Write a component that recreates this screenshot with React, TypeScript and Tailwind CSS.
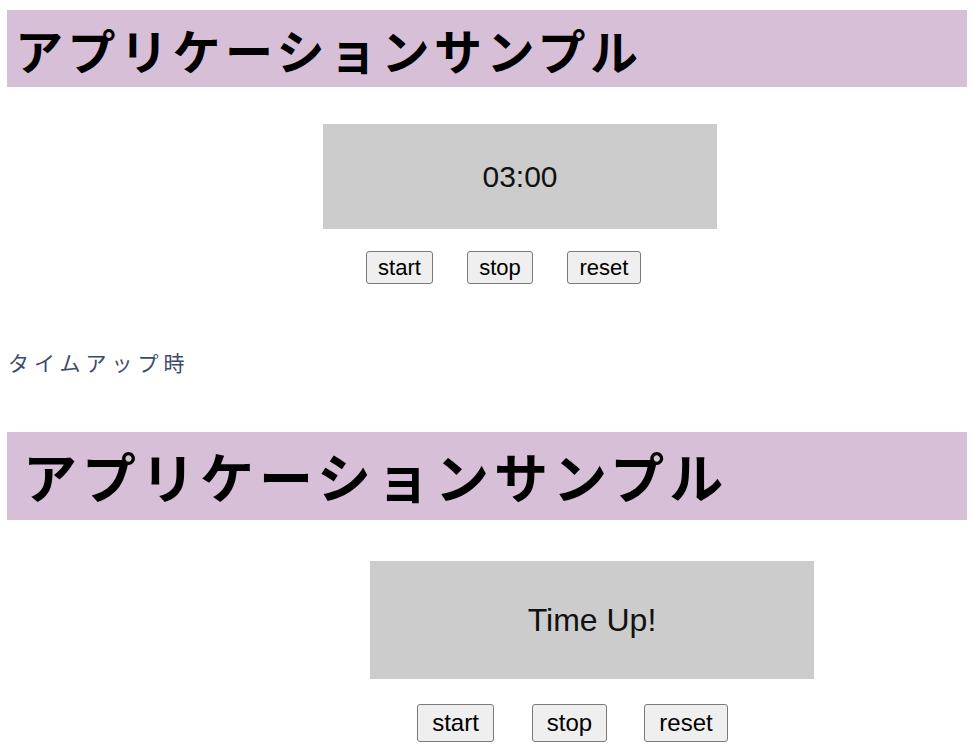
import React from "react";

function Btn({ label, className }: { label: string; className: string }) {
  return (
    <button
      className={`${className} flex items-center justify-center rounded-[3px] border border-[#7a7a7a] bg-[#efefef] text-black leading-none font-['Liberation_Sans',Arial,sans-serif]`}
    >
      {label}
    </button>
  );
}

export default function App() {
  return (
    <div className="w-[974px] h-[756px] overflow-hidden bg-white px-[7px] pt-[10px] flex flex-col items-start">
      <h1 className="self-stretch h-[77px] bg-[#d8bfd8] flex items-center pl-[8px] text-[48px] tracking-[4.5px] font-bold text-black leading-none font-['Noto_Sans_CJK_JP',sans-serif]">
        アプリケーションサンプル
      </h1>
      <div className="mt-[37px] ml-[316px] w-[394px] h-[105px] bg-[#cccccc] flex items-center justify-center text-[30px] text-[#111] font-['Liberation_Sans',Arial,sans-serif]">
        03:00
      </div>
      <div className="mt-[22px] ml-[359px] flex gap-[34px]">
        <Btn label="start" className="w-[67px] h-[33px] text-[22px]" />
        <Btn label="stop" className="w-[66px] h-[33px] text-[22px]" />
        <Btn label="reset" className="w-[74px] h-[33px] text-[22px]" />
      </div>
      <p className="mt-[65px] ml-[1px] h-[26px] leading-[26px] text-[21px] tracking-[5px] text-[#3c4b6b] font-['Noto_Sans_CJK_JP',sans-serif]">
        タイムアップ時
      </p>
      <h1 className="self-stretch mt-[57px] h-[88px] bg-[#d8bfd8] flex items-center pl-[16px] text-[54px] tracking-[5px] font-bold text-black leading-none font-['Noto_Sans_CJK_JP',sans-serif]">
        アプリケーションサンプル
      </h1>
      <div className="mt-[41px] ml-[363px] w-[444px] h-[118px] bg-[#cccccc] flex items-center justify-center text-[32px] text-[#111] font-['Liberation_Sans',Arial,sans-serif]">
        Time Up!
      </div>
      <div className="mt-[25px] ml-[410px] flex">
        <Btn label="start" className="w-[77px] h-[38px] text-[24px] mr-[38px]" />
        <Btn label="stop" className="w-[75px] h-[38px] text-[24px] mr-[37px]" />
        <Btn label="reset" className="w-[84px] h-[38px] text-[24px]" />
      </div>
    </div>
  );
}
